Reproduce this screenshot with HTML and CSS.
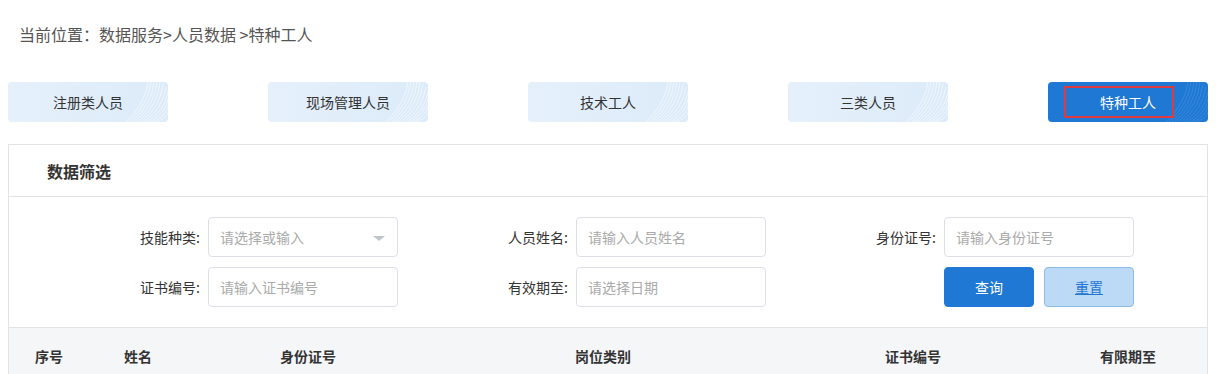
FILE: index.html
```html
<!DOCTYPE html>
<html lang="zh-CN">
<head>
<meta charset="utf-8">
<title>特种工人</title>
<link rel="stylesheet" href="styles.css">
</head>
<body>
<div class="page">
  <div class="crumb">当前位置<span class="colon">：</span>数据服务&gt;人员数据 &gt;特种工人</div>

  <div class="tabs">
    <div class="tab"><span>注册类人员</span><svg class="stripes" viewBox="0 0 160 40" preserveAspectRatio="none"><g class="lines"><path d="M118 40 Q138 20 140 0"/><path d="M121 40 Q141 21 143 0"/><path d="M124 40 Q144 22 146 0"/><path d="M127 40 Q147 23 149 0"/><path d="M130 40 Q150 24 152 0"/><path d="M133 40 Q152 26 155 2"/><path d="M136 40 Q154 28 158 5"/><path d="M139 40 Q156 30 160 10"/><path d="M142 40 Q157 32 160 17"/><path d="M145 40 Q158 34 160 24"/><path d="M148 40 Q159 36 160 30"/></g></svg></div>
    <div class="tab"><span>现场管理人员</span><svg class="stripes" viewBox="0 0 160 40" preserveAspectRatio="none"><g class="lines"><path d="M118 40 Q138 20 140 0"/><path d="M121 40 Q141 21 143 0"/><path d="M124 40 Q144 22 146 0"/><path d="M127 40 Q147 23 149 0"/><path d="M130 40 Q150 24 152 0"/><path d="M133 40 Q152 26 155 2"/><path d="M136 40 Q154 28 158 5"/><path d="M139 40 Q156 30 160 10"/><path d="M142 40 Q157 32 160 17"/><path d="M145 40 Q158 34 160 24"/><path d="M148 40 Q159 36 160 30"/></g></svg></div>
    <div class="tab"><span>技术工人</span><svg class="stripes" viewBox="0 0 160 40" preserveAspectRatio="none"><g class="lines"><path d="M118 40 Q138 20 140 0"/><path d="M121 40 Q141 21 143 0"/><path d="M124 40 Q144 22 146 0"/><path d="M127 40 Q147 23 149 0"/><path d="M130 40 Q150 24 152 0"/><path d="M133 40 Q152 26 155 2"/><path d="M136 40 Q154 28 158 5"/><path d="M139 40 Q156 30 160 10"/><path d="M142 40 Q157 32 160 17"/><path d="M145 40 Q158 34 160 24"/><path d="M148 40 Q159 36 160 30"/></g></svg></div>
    <div class="tab"><span>三类人员</span><svg class="stripes" viewBox="0 0 160 40" preserveAspectRatio="none"><g class="lines"><path d="M118 40 Q138 20 140 0"/><path d="M121 40 Q141 21 143 0"/><path d="M124 40 Q144 22 146 0"/><path d="M127 40 Q147 23 149 0"/><path d="M130 40 Q150 24 152 0"/><path d="M133 40 Q152 26 155 2"/><path d="M136 40 Q154 28 158 5"/><path d="M139 40 Q156 30 160 10"/><path d="M142 40 Q157 32 160 17"/><path d="M145 40 Q158 34 160 24"/><path d="M148 40 Q159 36 160 30"/></g></svg></div>
    <div class="tab active"><span>特种工人</span><svg class="stripes" viewBox="0 0 160 40" preserveAspectRatio="none"><g class="lines"><path d="M118 40 Q138 20 140 0"/><path d="M121 40 Q141 21 143 0"/><path d="M124 40 Q144 22 146 0"/><path d="M127 40 Q147 23 149 0"/><path d="M130 40 Q150 24 152 0"/><path d="M133 40 Q152 26 155 2"/><path d="M136 40 Q154 28 158 5"/><path d="M139 40 Q156 30 160 10"/><path d="M142 40 Q157 32 160 17"/><path d="M145 40 Q158 34 160 24"/><path d="M148 40 Q159 36 160 30"/></g></svg><i class="mark"></i></div>
  </div>

  <div class="panel">
    <div class="panel-head">数据筛选</div>
    <div class="filters">
      <div class="field">
        <label class="lbl">技能种类:</label>
        <div class="input select"><span class="ph">请选择或输入</span><i class="caret"></i></div>
      </div>
      <div class="field">
        <label class="lbl">人员姓名:</label>
        <div class="input"><span class="ph">请输入人员姓名</span></div>
      </div>
      <div class="field">
        <label class="lbl">身份证号:</label>
        <div class="input"><span class="ph">请输入身份证号</span></div>
      </div>
      <div class="field">
        <label class="lbl">证书编号:</label>
        <div class="input"><span class="ph">请输入证书编号</span></div>
      </div>
      <div class="field">
        <label class="lbl">有效期至:</label>
        <div class="input"><span class="ph">请选择日期</span></div>
      </div>
      <div class="field">
        <span class="lbl"></span>
        <div class="btns">
          <button class="btn primary">查询</button>
          <button class="btn reset">重置</button>
        </div>
      </div>
    </div>
    <div class="thead">
      <div>序号</div>
      <div>姓名</div>
      <div>身份证号</div>
      <div>岗位类别</div>
      <div>证书编号</div>
      <div>有限期至</div>
    </div>
  </div>
</div>
</body>
</html>
```

FILE: styles.css
```css
* { box-sizing: border-box; }
html, body { margin: 0; padding: 0; background: #fff; }
body {
  font-family: "Noto Sans CJK SC", "Microsoft YaHei", sans-serif;
  color: #333;
  font-size: 14px;
}
.page { padding: 0 8px; width: 1216px; }

.crumb {
  padding: 24px 0 0 11px;
  height: 44px;
  line-height: 20px;
  font-size: 16px;
  color: #555;
  margin-bottom: 38px;
}
.colon { font-family: "Noto Sans CJK JP", "Noto Sans CJK SC", sans-serif; }

.tabs {
  display: flex;
  justify-content: space-between;
  width: 1200px;
  margin-bottom: 22px;
}
.tab {
  position: relative;
  width: 160px;
  height: 40px;
  border-radius: 4px;
  background: linear-gradient(90deg, #e5f0fb 0%, #dcebf9 100%);
  display: flex;
  align-items: center;
  justify-content: center;
  font-size: 14px;
  color: #333;
  overflow: hidden;
}
.tab span { position: relative; z-index: 2; }
.stripes {
  position: absolute;
  left: 0; top: 0;
  width: 160px; height: 40px;
  z-index: 1;
}
.lines path {
  fill: none;
  stroke: #ffffff;
  stroke-width: 0.7;
  opacity: 0.8;
}
.tab.active {
  background: #1f78d3;
  color: #fff;
}
.tab.active .lines path { stroke: #4b96e1; opacity: 0.8; }
.mark {
  position: absolute;
  left: 16px; top: 4px;
  width: 110px; height: 32px;
  border: 2px solid #e0393e;
  z-index: 3;
}

.panel {
  width: 1200px;
  border: 1px solid #e3e3e3;
  border-bottom: none;
  height: 240px;
}
.panel-head {
  height: 52px;
  line-height: 52px;
  padding-left: 38px;
  font-size: 16px;
  font-weight: bold;
  color: #333;
  border-bottom: 1px solid #e3e3e3;
}

.filters {
  display: grid;
  grid-template-columns: repeat(3, 298px);
  column-gap: 70px;
  row-gap: 10px;
  padding: 20px 0 20px 91px;
}
.field {
  display: flex;
  align-items: center;
  gap: 8px;
}
.lbl {
  width: 100px;
  text-align: right;
  font-size: 14px;
  color: #333;
  line-height: 20px;
}
.input {
  position: relative;
  width: 190px;
  height: 40px;
  border: 1px solid #dcdfe6;
  border-radius: 4px;
  padding: 0 11px;
  display: flex;
  align-items: center;
}
.ph { color: #aaa; font-size: 14px; }
.caret {
  position: absolute;
  right: 12px; top: 18px;
  width: 0; height: 0;
  border-left: 6px solid transparent;
  border-right: 6px solid transparent;
  border-top: 5px solid #c0c4cc;
}
.btns { display: flex; gap: 10px; }
.btn {
  width: 90px;
  height: 40px;
  border-radius: 4px;
  font-family: inherit;
  font-size: 14px;
  cursor: pointer;
}
.btn.primary {
  background: #1f78d3;
  border: 1px solid #1f78d3;
  color: #fff;
}
.btn.reset {
  background: #bcdaf6;
  border: 1px solid #8ebbe8;
  color: #1f78d3;
  text-decoration: underline;
}

.thead {
  display: grid;
  grid-template-columns: 89px 156px 295px 310px 215px 1fr;
  padding-left: 26px;
  height: 56px;
  align-items: center;
  background: #f5f6f8;
  border-top: 1px solid #e3e3e3;
  font-weight: bold;
  font-size: 14px;
  color: #333;
}
```
